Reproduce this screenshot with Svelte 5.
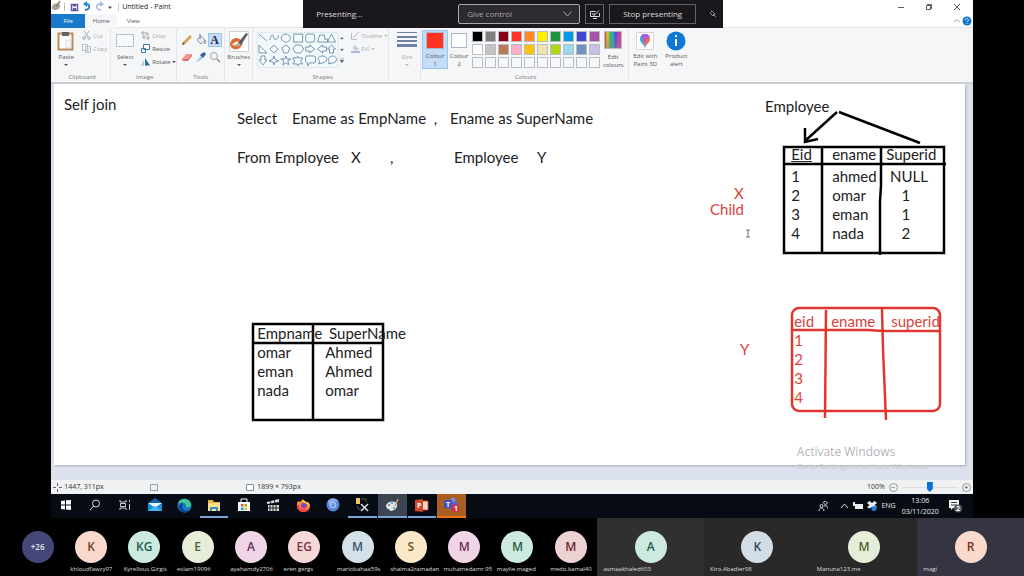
<script>
    const palette = [
        "#000000", "#7f7f7f", "#880015", "#ff3224", "#ff8a27", "#fff200", "#1e9440", "#0098e8", "#3f48cc", "#a555a5",
        "#ffffff", "#c3c3c3", "#b97a57", "#ffaec9", "#ffc20e", "#efe4b0", "#b0d619", "#99d9ea", "#7092be", "#c8bfe7",
        "", "", "", "", "", "", "", "", "", ""
    ];

    // text boxes typed straight onto the canvas
    const notes = [
        { x: 10, y: 26, text: "Self join" },
        { x: 183, y: 40, text: "Select" },
        { x: 238, y: 40, text: "Ename as EmpName  ," },
        { x: 396, y: 40, text: "Ename as SuperName" },
        { x: 183, y: 79, text: "From Employee" },
        { x: 297, y: 79, text: "X" },
        { x: 336, y: 79, text: "," },
        { x: 400, y: 79, text: "Employee" },
        { x: 483, y: 79, text: "Y" },
        { x: 711, y: 28, text: "Employee" },
        { x: 680, y: 115, text: "X", red: true },
        { x: 656, y: 131, text: "Child", red: true },
        { x: 686, y: 271, text: "Y", red: true }
    ];

    const employees = [
        ["1", "ahmed", " NULL"],
        ["2", "omar", "    1"],
        ["3", "eman", "    1"],
        ["4", "nada", "    2"]
    ];

    const result = [
        ["omar", "Ahmed"],
        ["eman", "Ahmed"],
        ["nada", "omar"]
    ];

    const people = [
        { initials: "K", name: "khloudfawzy97", bg: "#f8d9cc", fg: "#7a3b22" },
        { initials: "KG", name: "Kyrellous Girgis", bg: "#cdeadf", fg: "#1e5c46" },
        { initials: "E", name: "eslam19096", bg: "#e6edd9", fg: "#4c6335" },
        { initials: "A", name: "ayahamdy2706", bg: "#efd5e5", fg: "#6b2f57" },
        { initials: "EG", name: "eren gergs", bg: "#f6d8d9", fg: "#7a3540" },
        { initials: "M", name: "mariobahaa59s", bg: "#d5e1e9", fg: "#36536a" },
        { initials: "S", name: "shaima2ramadan", bg: "#fbe8c8", fg: "#6b501c" },
        { initials: "M", name: "muhamedamr.95", bg: "#efd5e5", fg: "#6b2f57" },
        { initials: "M", name: "maylie.maged", bg: "#cdeadf", fg: "#1e5c46" },
        { initials: "M", name: "medo.kamal40", bg: "#ecd2d3", fg: "#6b2630" },
        { initials: "A", name: "asmaakhaled603", bg: "#cdeadf", fg: "#1e5c46", tile: "grey" },
        { initials: "K", name: "Kiro.Abadier98", bg: "#d2dde6", fg: "#2c4a5a", tile: "dark" },
        { initials: "M", name: "Manuna123.me", bg: "#e6edd9", fg: "#4c6335", tile: "dark" },
        { initials: "R", name: "magi", bg: "#f8d9cc", fg: "#7a2f1c", tile: "speaking" }
    ];

    let colour = $state("#ff3224");
    let zoom = $state(50);
</script>

<div class="page">
    <div class="desktop">
        <header class="titlebar">
            <svg class="quick" width="62" height="14" viewBox="0 0 62 14" fill="none">
                <path d="M1 6c1-3 6-4 8-1 1 3-2 5-5 5-2 0-4-1-3-4z" fill="#aaa79c" />
                <path d="M5 7l4-6" stroke="#8e7b62" stroke-width="1.5" />
                <path d="M13.500 3v8" stroke="#bbb" />
                <path d="M20.500 4.500h6v6h-6z" fill="#fff" stroke="#6256a5" stroke-width="1.500" />
                <path d="M22 4h3v2.500h-3zM22 8h3v2h-3z" fill="#6256a5" />
                <path d="M34 10c6-1 5-6 1-6h-1" stroke="#2788d0" stroke-width="2" />
                <path d="M36 1v6l-4-3z" fill="#2788d0" />
                <path d="M50 10c-6-1-5-6-1-6h1" stroke="#9fbbdc" stroke-width="1.500" />
                <path d="M49 1v6l4-3z" fill="#9fbbdc" />
                <path d="M57 6.500h4l-2 2.500z" fill="#555" />
            </svg>
            <span class="title">Untitled - Paint</span>
            <div class="window-buttons">
                <button aria-label="Minimise"><svg width="8" height="8"><path d="M1 4.500h6" /></svg></button>
                <button aria-label="Restore"><svg width="8" height="8"><path d="M1.500 2.500h4v4h-4zM2.500 2.500v-1h4v4h-1" /></svg></button>
                <button aria-label="Close"><svg width="8" height="8"><path d="M1 1l6 6M7 1l-6 6" /></svg></button>
            </div>
        </header>

        <nav class="tabs">
            <button class="file">File</button>
            <button class="current">Home</button>
            <button>View</button>
            <svg width="20" height="10" viewBox="0 0 20 10">
                <path d="M1 6l3-2.500 3 2.500" fill="none" stroke="#aaa" />
                <circle cx="14" cy="5" r="4.500" fill="#1477cf" />
                <path d="M12.500 4c0-2 3-2 3 0 0 1-1.500 1-1.500 2M14 7v1" fill="none" stroke="#fff" stroke-width=".8" />
            </svg>
        </nav>

        <div class="ribbon">
            <section class="group clipboard">
                <div class="tools">
                    <button class="big">
                        <svg width="18" height="21" viewBox="0 0 18 21">
                            <path d="M1.500 2.500h14v16h-14z" fill="#fff" stroke="#bd8a5c" stroke-width="2" />
                            <path d="M5 1h7v4H5z" fill="#67625f" />
                            <path d="M9 9h5v8H9z" fill="#f4f6fb" stroke="#c9cedb" stroke-width=".6" />
                        </svg>
                        <span>Paste</span>
                        <i></i>
                    </button>
                    <div class="stack">
                        <button class="off">
                            <svg width="9" height="9" viewBox="0 0 9 9" fill="none" stroke="#a9b1c2"><path d="M2 0l4 6M7 0L3 6" /><circle cx="2" cy="7" r="1.300" /><circle cx="7" cy="7" r="1.300" /></svg>
                            Cut
                        </button>
                        <button class="off">
                            <svg width="9" height="9" viewBox="0 0 9 9" fill="#f8f9fc" stroke="#b4bccb"><path d="M.5.500h5v6h-5zM3.500 2.500h5v6h-5zM5 5h2M5 7h2" /></svg>
                            Copy
                        </button>
                    </div>
                </div>
                <h2>Clipboard</h2>
            </section>

            <section class="group image">
                <div class="tools">
                    <button class="big">
                        <svg width="18" height="21" viewBox="0 0 18 21"><path d="M.5 3.500h17v12H.5z" fill="#f7f9fb" stroke="#9aa7b5" stroke-dasharray="2 1" /></svg>
                        <span>Select</span>
                        <i></i>
                    </button>
                    <div class="stack">
                        <button class="off">
                            <svg width="9" height="9" viewBox="0 0 9 9" fill="none" stroke="#a9a9b0"><path d="M2 0v7h7M0 2h7v7M2 7l5-5" /></svg>
                            Crop
                        </button>
                        <button>
                            <svg width="9" height="9" viewBox="0 0 9 9" fill="#fff" stroke="#3b7ba5"><path d="M2.500.500h6v5h-6zM.5 4.500h4v4h-4z" /></svg>
                            Resize
                        </button>
                        <button>
                            <svg width="9" height="9" viewBox="0 0 9 9"><path d="M0 8.500L3 3v5.500z" fill="#9fcbe4" /><path d="M4 1l5 7.500H4z" fill="#2a6d93" /></svg>
                            Rotate <i></i>
                        </button>
                    </div>
                </div>
                <h2>Image</h2>
            </section>

            <section class="group drawing">
                <div class="tools tool-grid">
                    <button aria-label="Pencil"><svg width="12" height="12" viewBox="0 0 12 12"><path d="M1 11l1-3 7-7 2 2-7 7z" fill="#d9a15a" /><path d="M1 11l1-3 2 2z" fill="#6b5541" /></svg></button>
                    <button aria-label="Fill"><svg width="12" height="12" viewBox="0 0 12 12"><path d="M6 2l4 4-4 4-4-4z" fill="#eef1f6" stroke="#8b97a6" /><path d="M5 0v5M10 6v4" stroke="#8197b5" stroke-width="1.500" /></svg></button>
                    <button class="chosen" aria-label="Text"><b>A</b></button>
                    <button aria-label="Eraser"><svg width="12" height="12" viewBox="0 0 12 12"><path d="M1 8l4-5h6L7 8z" fill="#f4968f" /><path d="M1 8h6v2H2zM7 8l4-5v2L7 10z" fill="#dc6d6d" /></svg></button>
                    <button aria-label="Colour picker"><svg width="12" height="12" viewBox="0 0 12 12"><path d="M1 11l5-6 2 2-6 4z" fill="#9cc5e4" /><path d="M5 4l4-3 2 2-3 4z" fill="#275f9b" /></svg></button>
                    <button aria-label="Magnifier"><svg width="12" height="12" viewBox="0 0 12 12" fill="none"><circle cx="5" cy="5" r="3.500" fill="#f4f8fb" stroke="#98a3ad" /><path d="M8 8l3 3" stroke="#a48d72" stroke-width="1.500" /></svg></button>
                </div>
                <h2>Tools</h2>
            </section>

            <section class="group brushes">
                <button class="big">
                    <svg width="20" height="21" viewBox="0 0 20 21">
                        <path d="M.5.500h19v20H.5z" fill="#fff" stroke="#cfd3d9" />
                        <path d="M1 13C2 7 8 5 12 9c3 3 1 7-3 9-4 1-8-1-8-5z" fill="#e06b32" />
                        <path d="M3 14c2-4 6-4 8-3l-2 4z" fill="#fff1df" />
                        <path d="M9 12l8-10 2 1-7 11z" fill="#565c64" />
                        <path d="M6 15c1-2 3-3 4-3l2 2c-2 2-4 2-6 1z" fill="#b7a78f" />
                    </svg>
                    <span>Brushes</span>
                    <i></i>
                </button>
            </section>

            <section class="group shapes">
                <div class="tools">
                    <svg class="gallery" width="90" height="36" viewBox="0 0 90 36" fill="#f8fcff" stroke="#557d9c" stroke-width=".8">
                        <path d="M.5.500h81v35H.5z" fill="#f1f9fb" stroke="#dce3e9" />
                        <path d="M2 2l8 7M13 8c2-8 3-5 4-2s4 1 5-3" fill="none" />
                        <ellipse cx="29" cy="6" rx="4.500" ry="4" />
                        <rect x="37" y="2" width="9" height="8" />
                        <rect x="49" y="2" width="9" height="8" rx="2" />
                        <path d="M61 10l2-7h5v4h3v3zM75 2l4 8h-8z" />
                        <path d="M2 13l8 8H2zM17 13l4 4-4 4-4-4zM29 13l4 3-2 5h-4l-2-5zM39 13h5l3 4-3 4h-5l-3-4zM49 15h4v-2l5 4-5 4v-2h-4zM70 15h-4v-2l-5 4 5 4v-2h4zM75 13l4 4h-2v4h-4v-4h-2z" />
                        <path d="M4 24h4v4h2l-4 5-4-5h2zM17 24l1 3 4 2-4 1-1 3-1-3-4-1 4-2zM29 24l1 3h4l-3 2 1 4-3-2-3 2 1-4-3-2h4zM41 24l1 2h4l-2 3 2 3h-4l-1 2-1-2h-4l2-3-2-3h4z" />
                        <path d="M50 24h7q2 0 2 2v3q0 2-2 2h-4l-2 3v-3q-2 0-2-2v-3q0-2 1-2z" />
                        <path d="M62 32l1-3c-3-2-1-5 3-5 5 0 6 6 0 7zM72 32l1-2c-3-3 0-6 4-6 4 1 4 7-1 7z" />
                        <path d="M84 7h3l-1.500-2zM84 17h3l-1.500 2zM83.500 28h4l-2 3zM83.500 26.500h4" fill="#666" stroke="#666" stroke-width=".3" />
                    </svg>
                    <div class="stack">
                        <button class="off">
                            <svg width="9" height="9" viewBox="0 0 9 9" fill="none" stroke="#b7bcc7"><path d="M.5 2v6.500H6M2 7l6-6" /></svg>
                            Outline <i></i>
                        </button>
                        <button class="off">
                            <svg width="9" height="9" viewBox="0 0 9 9"><path d="M1 4l3-3 4 4-3 2z" fill="#c5cede" /><path d="M0 7h9v2H0z" fill="#aeb8d6" /></svg>
                            Fill <i></i>
                        </button>
                    </div>
                </div>
                <h2>Shapes</h2>
            </section>

            <section class="group size">
                <button class="big off">
                    <svg width="20" height="21" viewBox="0 0 20 21" fill="#727fa9"><path d="M0 1h20v1H0zM0 5h20v2H0zM0 9h20v2H0zM0 13h20v3H0z" /></svg>
                    <span>Size</span>
                    <i></i>
                </button>
            </section>

            <section class="group colours">
                <div class="tools">
                    <button class="big slot chosen"><em style="background: {colour}"></em><span>Colour<br>1</span></button>
                    <button class="big slot second"><em></em><span>Colour<br>2</span></button>
                    <div class="palette">
                        {#each palette as swatch}
                            <button
                                aria-label={swatch || "empty"}
                                style="background: {swatch || '#f7f8f9'}"
                                onclick={() => swatch && (colour = swatch)}
                            ></button>
                        {/each}
                    </div>
                    <button class="big">
                        <span class="rainbow"></span>
                        <span>Edit<br>colours</span>
                    </button>
                </div>
                <h2>Colours</h2>
            </section>

            <section class="group extra">
                <button class="big">
                    <svg width="18" height="20" viewBox="0 0 18 20">
                        <path d="M.5 1.500h17v17H.5z" fill="#fcfcfd" stroke="#d5d8dc" />
                        <path d="M9 17c-1-4-5-5-5-9 0-3 2-5 5-5v7z" fill="#38a9e4" />
                        <path d="M9 3c3 0 5 2 5 5 0 4-4 5-5 9z" fill="#f07048" />
                        <path d="M9 3c3 0 4 1 4.500 3L9 9 5 6c0-2 2-3 4-3z" fill="#a65be0" />
                        <circle cx="9" cy="9" r="2" fill="#ec4b99" />
                    </svg>
                    <span>Edit with<br>Paint 3D</span>
                </button>
                <button class="big">
                    <svg width="20" height="20" viewBox="0 0 20 20"><circle cx="10" cy="10" r="9.500" fill="#0f78d4" /><path d="M10 8v7M10 4v2" stroke="#fff" stroke-width="2" /></svg>
                    <span>Product<br>alert</span>
                </button>
            </section>
        </div>

        <main class="workspace">
            <div class="canvas">
                <svg class="strokes" width="100%" height="100%">
                    <g fill="none" stroke="#000" stroke-width="2.500">
                        <path d="M730 63h160v106H730zM730 80h162M768 63v106M827 62v40l-1 15v54" />
                        <path d="M783 28l-32 29M751 44v14l13-3M785 28l81 31" />
                        <path d="M199 240h130v96H199zM199 259h130M259 240v96" />
                    </g>
                    <g fill="none" stroke="#e3352f" stroke-width="2.500">
                        <rect x="738" y="224" width="148" height="103" rx="7" />
                        <path d="M738 246h76l15 1h58M772 226l-1 108M828 225l1 40 3 71" />
                    </g>
                    {#each notes as note}
                        <text x={note.x} y={note.y} class:red={note.red}>{note.text}</text>
                    {/each}
                    <path d="M692 146h4M694 146v7M692 153h4" stroke="#555" fill="none" stroke-width=".8" />
                </svg>

                <table class="employee">
                    <thead><tr><th><u>Eid</u></th><th>ename</th><th>Superid</th></tr></thead>
                    <tbody>
                        {#each employees as row}
                            <tr>{#each row as cell}<td>{cell}</td>{/each}</tr>
                        {/each}
                    </tbody>
                </table>

                <table class="result">
                    <thead><tr><th>Empname</th><th>{" SuperName"}</th></tr></thead>
                    <tbody>
                        {#each result as row}
                            <tr>{#each row as cell}<td>{cell}</td>{/each}</tr>
                        {/each}
                    </tbody>
                </table>

                <table class="super red">
                    <thead><tr><th>eid</th><th>ename</th><th>superid</th></tr></thead>
                    <tbody>
                        {#each employees as row}
                            <tr><td>{row[0]}</td><td></td><td></td></tr>
                        {/each}
                    </tbody>
                </table>
            </div>
            <div class="watermark">
                <p>Activate Windows</p>
                <small>Go to Settings to activate Windows.</small>
            </div>
        </main>

        <footer class="status">
            <span class="position">
                <svg width="9" height="9" viewBox="0 0 9 9"><path d="M4.500 0v3M4.500 6v3M0 4.500h3M6 4.500h3" stroke="#667" /></svg>
                1447, 311px
            </span>
            <span class="selection">
                <svg width="10" height="9" viewBox="0 0 10 9"><path d="M1.500 1.500h7v6h-7z" fill="none" stroke="#999fa8" /></svg>
            </span>
            <span class="dimensions">
                <svg width="10" height="9" viewBox="0 0 10 9"><path d="M1.500 1.500h7v6h-7z" fill="#fff" stroke="#7b91ab" /></svg>
                1899 × 793px
            </span>
            <label for="zoom">100%</label>
            <button aria-label="Zoom out">−</button>
            <input id="zoom" type="range" min="0" max="100" bind:value={zoom}>
            <button aria-label="Zoom in">+</button>
        </footer>

        <div class="taskbar">
            <div class="apps">
                <button aria-label="Start"><svg width="12" height="12" viewBox="0 0 12 12" fill="#fff"><path d="M1 2l4-.5v4H1zM6 1.300L11 1v4.500H6zM1 6.500h4v4L1 10zM6 6.500h5V11l-5-.5z" /></svg></button>
                <button aria-label="Search"><svg width="12" height="12" viewBox="0 0 12 12" fill="none" stroke="#ddd"><circle cx="7" cy="4.500" r="3.500" /><path d="M4.500 7L1 11" /></svg></button>
                <button aria-label="Task view"><svg width="12" height="12" viewBox="0 0 12 12" fill="none" stroke="#ccc"><path d="M1 1v2h6V1M1.500 4.500h5v3h-5zM1 11V9h6v2M10.500 1v2M10.500 5v6" /></svg></button>
                <button aria-label="Mail"><svg width="16" height="14" viewBox="0 0 16 14"><path d="M1 5l7-5 7 5v8H1z" fill="#0f65b5" /><path d="M1 5h14l-7 5z" fill="#e9f5fc" /><path d="M1 5l7 5 7-5v8H1z" fill="#1890dd" /><path d="M1 13l7-5 7 5z" fill="#42b5ee" /></svg></button>
                <button aria-label="Edge"><svg width="15" height="15" viewBox="0 0 15 15"><circle cx="7.500" cy="7.500" r="7" fill="#1679c5" /><path d="M1 6C2 0 12-1 14 6c0 3-2 4-5 3 1-4-4-6-8-3z" fill="#45c795" /><path d="M5 8c0 4 4 6 8 4-4 5-12 2-11-4 1-2 3-3 5-2-1 0-2 1-2 2z" fill="#0c438c" /></svg></button>
                <button class="open" aria-label="Explorer"><svg width="14" height="13" viewBox="0 0 14 13"><path d="M1 1h5l1 2h6v9H1z" fill="#e9b53d" /><path d="M1 4h12v8H1z" fill="#fbe08c" /><path d="M3 12V8h8v4H9v-2H5v2z" fill="#398ec6" /></svg></button>
                <button aria-label="Store"><svg width="14" height="14" viewBox="0 0 14 14"><path d="M4 4V1h6v3" fill="none" stroke="#fff" /><path d="M1 4h12v9H1z" fill="#f5f5f5" /><path d="M4 6h2.500v2.500H4z" fill="#f35325" /><path d="M7.500 6H10v2.500H7.500z" fill="#81bc06" /><path d="M4 9.500h2.500V12H4z" fill="#05a6f0" /><path d="M7.500 9.500H10V12H7.500z" fill="#ffba08" /></svg></button>
                <button aria-label="Movies"><svg width="13" height="13" viewBox="0 0 13 13"><path d="M0 3l12-3v3L0 5z" fill="#ddd" /><path d="M1 6h11v6H1z" fill="#d8d8d8" /><path d="M3 1l1 4M7 0l1 4M3 6v6M6 6v6M9 6v6M1 9h11" stroke="#222" /></svg></button>
                <button aria-label="Firefox"><svg width="15" height="15" viewBox="0 0 15 15"><path d="M2 3l2 1 3-3c0 2 3 2 4 4l1-1c4 6 0 10-4 10C2 14-1 9 2 3z" fill="#ff9026" /><path d="M1 7c0 9 11 9 13 2-2 2-4 3-7 2C4 11 3 9 4 7z" fill="#f43f4e" /><circle cx="8" cy="7.500" r="3" fill="#8944c6" /><path d="M7 1c0 2 3 2 4 4l1-1c2 2 2 4 2 5-2-3-4-4-6-4-1-1-2-2-1-4z" fill="#ffd23e" /></svg></button>
                <button aria-label="Chromium"><svg width="14" height="14" viewBox="0 0 14 14"><circle cx="7" cy="7" r="6.500" fill="#5486d5" /><path d="M7 3.500h6C10-1 4-1 1.500 3.500L4 8z" fill="#89afe8" /><circle cx="7" cy="7" r="3" fill="#6f9be6" stroke="#b9d1f7" /></svg></button>
                <button class="open" aria-label="Management studio"><svg width="14" height="14" viewBox="0 0 14 14"><path d="M0 0h4v6H0z" fill="#edc864" /><path d="M5 1h5v3M2 8v3h3" fill="none" stroke="#555" /><path d="M5 6l7 7M12 6l-7 7" stroke="#d5dde2" stroke-width="1.500" /></svg></button>
                <button class="open front" aria-label="Paint"><svg width="15" height="15" viewBox="0 0 15 15"><path d="M1 8c0-4 9-7 11-2 1 4-3 7-7 7 0-3-3 0-4-5z" fill="#d8e8ec" /><path d="M10 8l3-7" stroke="#d2a065" stroke-width="1.500" /><circle cx="4" cy="7" r="1" fill="#e4443a" /><circle cx="7" cy="5" r="1" fill="#3e8edb" /><circle cx="9" cy="10" r="1" fill="#4ba94d" /></svg></button>
                <button class="open" aria-label="PowerPoint"><svg width="14" height="13" viewBox="0 0 14 13"><path d="M7 2h6v9H7z" fill="#f5d8ce" stroke="#d24726" stroke-width=".8" /><path d="M0 1l8-1v13l-8-1z" fill="#d24726" /><text x="2" y="9" class="glyph">P</text></svg></button>
                <button class="alerting" aria-label="Teams"><svg width="17" height="16" viewBox="0 0 17 16"><circle cx="10" cy="3" r="2.500" fill="#7b83eb" /><path d="M6 5h9v5c-1 5-9 5-9 0z" fill="#5a61c4" /><path d="M1 3h8v8H1z" fill="#4650b8" /><text x="3" y="10" class="glyph">T</text><circle cx="12.500" cy="11.500" r="4" fill="#d92f3d" /><text x="11" y="14" class="glyph">1</text></svg></button>
            </div>
            <div class="tray">
                <svg width="10" height="11" viewBox="0 0 10 11" fill="none" stroke="#ddd"><circle cx="3.500" cy="5" r="1.500" /><path d="M1 10c0-4 5-4 5 0M5 2c0-2 4-2 4 0s-3 2-3 0M6 5c3-1 4 1 4 3" /></svg>
                <svg class="up" width="9" height="6" viewBox="0 0 9 6" fill="none" stroke="#ddd"><path d="M1 5l3.500-4L8 5" /></svg>
                <svg width="10" height="8" viewBox="0 0 10 8" fill="#eee"><path d="M2 2h8v5H2zM0 0h2v4H0z" /></svg>
                <svg width="10" height="10" viewBox="0 0 10 10"><path d="M2.500 0L5 2 7.500 0 10 2 7.500 4 10 6 7.500 7.500 5 6 2.500 7.500 0 6l2.500-2L0 2z" fill="#e4efff" /><circle cx="7" cy="7.500" r="2.500" fill="#287de0" /></svg>
                <span>ENG</span>
                <time datetime="2020-11-03T13:06">13:06<br>03/11/2020</time>
                <svg class="action" width="15" height="14" viewBox="0 0 15 14"><path d="M1 1h10v8H5l-2 2V9H1z" fill="#fff" /><path d="M3 3.500h6M3 6h6" stroke="#333" /><circle cx="10" cy="9.500" r="4" fill="#555a60" /><text x="8" y="12" class="glyph">2</text></svg>
            </div>
        </div>

        <div class="sharing">
            <span>Presenting...</span>
            <div class="control">
                <select aria-label="Give control"><option>Give control</option></select>
                <svg width="9" height="6" viewBox="0 0 9 6" fill="none" stroke="#a9a7ae"><path d="M.5.500l4 4.500 4-4.500" /></svg>
            </div>
            <button class="system" aria-label="System audio">
                <svg width="10" height="9" viewBox="0 0 10 9" fill="none" stroke="#ddd"><path d="M.5 1.500h5M9.500 3v3.500h-9v-5M2 4h3M3 6.500l6-6M3 8.500h4" /></svg>
            </button>
            <button class="stop">Stop presenting</button>
            <svg class="pin" width="8" height="8" viewBox="0 0 8 8" fill="none" stroke="#8a888d"><path d="M1 3l2-2 3 3-2 2zM4 4l3 3" /></svg>
        </div>
    </div>

    <div class="participants">
        <div class="person"><span class="avatar more">+26</span></div>
        {#each people as person}
            <div class="person {person.tile}">
                <span class="avatar" style="background: {person.bg}; color: {person.fg}">{person.initials}</span>
                <span class="name">{person.name}</span>
            </div>
        {/each}
    </div>
</div>

<style>
    :global(body) {
        background: #000;
    }

    .page {
        display: flex;
        flex-direction: column;
        min-height: 100vh;
        font: 6px/8px "Open Sans", "Noto Sans", sans-serif;
        color: #555;
    }

    button {
        display: flex;
        align-items: center;
        justify-content: center;
        padding: 0;
        border: 0;
        background: none;
        color: inherit;
        font: inherit;
        white-space: nowrap;
    }

    i {
        width: 0;
        height: 0;
        border: 2px solid transparent;
        border-top-color: #555;
        border-bottom: 0;
    }

    .desktop {
        position: relative;
        display: flex;
        flex: 1;
        flex-direction: column;
        margin: 0 5%;
        background: #fff;
    }

    .titlebar {
        display: flex;
        align-items: center;
        height: 14px;
    }

    .title {
        margin-left: 5px;
        padding-left: 3px;
        border-left: 1px solid #ccc;
        font-size: 7px;
        color: #222;
    }

    .window-buttons {
        display: flex;
        gap: 20px;
        margin-left: auto;
        padding-right: 12px;
    }

    .window-buttons path {
        fill: none;
        stroke: #333;
        stroke-width: .8;
    }

    .tabs {
        display: flex;
        align-items: center;
        height: 14px;
        border-bottom: 1px solid #e3e4e7;
        box-sizing: border-box;
    }

    .tabs button {
        width: 32px;
        height: 14px;
    }

    .tabs .file {
        width: 34px;
        background: #1979ca;
        color: #fff;
    }

    .tabs .current {
        background: #f5f6f7;
    }

    .tabs svg {
        margin-left: auto;
    }

    .ribbon {
        display: flex;
        height: 54px;
        background: #f5f6f7;
        border-bottom: 2px solid #cbced2;
    }

    .group {
        display: flex;
        flex-direction: column;
        justify-content: space-between;
        padding: 3px 0 1px;
        border-right: 1px solid #e5e7ea;
        box-sizing: border-box;
    }

    .tools {
        display: flex;
        align-items: flex-start;
        gap: 4px;
    }

    h2 {
        margin: 0;
        font: inherit;
        text-align: center;
        color: #777;
    }

    .big {
        flex-direction: column;
        justify-content: flex-start;
        gap: 1px;
        min-width: 24px;
    }

    .big i {
        margin-top: 2px;
    }

    .stack {
        display: flex;
        flex-direction: column;
        align-items: flex-start;
        gap: 4px;
    }

    .stack button {
        gap: 2px;
        height: 9px;
    }

    .off {
        color: #aaa;
    }

    .off i {
        border-top-color: #bbb;
    }

    .clipboard {
        width: 60px;
        padding-left: 3px;
    }

    .image {
        width: 66px;
        padding-left: 2px;
    }

    .drawing {
        width: 48px;
    }

    .tool-grid {
        display: grid;
        grid-template-columns: repeat(3, 12px);
        gap: 5px 2px;
        justify-content: center;
        padding-top: 3px;
    }

    .tool-grid button {
        height: 12px;
    }

    .chosen {
        background: #c4dcf5;
        outline: 1px solid #9ac5ee;
    }

    .tool-grid b {
        font: bold 12px/12px "Liberation Serif", serif;
        color: #1d2f4d;
    }

    .brushes {
        width: 28px;
    }

    .shapes {
        width: 136px;
        padding-left: 4px;
    }

    .gallery {
        margin-top: 1px;
    }

    .size {
        width: 32px;
        padding-left: 4px;
    }

    .colours {
        width: 208px;
        padding-left: 2px;
    }

    .colours .tools {
        gap: 0;
    }

    .slot {
        width: 24px;
        height: 37px;
        gap: 3px;
        padding-top: 1px;
    }

    .slot em {
        width: 16px;
        height: 16px;
        border: 1px solid #aab7c8;
        background: #fff;
    }

    .slot.second em {
        width: 14px;
        height: 14px;
        margin: 1px;
    }

    .palette {
        display: grid;
        grid-template-columns: repeat(10, 11px);
        gap: 2px;
        padding: 0 1px;
    }

    .palette button {
        height: 11px;
        border: 1px solid #b9bcc0;
    }

    .rainbow {
        width: 16px;
        height: 16px;
        margin: 0 0 3px;
        border: 1px solid #bbb;
        background: linear-gradient(transparent, #8888), linear-gradient(90deg, #e8392e, #e9d92a, #31b645, #26a9d4, #4547d3, #c737c7, #e33965);
    }

    .extra {
        flex-direction: row;
        justify-content: flex-start;
        gap: 7px;
        padding-left: 4px;
        border: 0;
    }

    .workspace {
        position: relative;
        display: flex;
        flex: 1;
        padding: 0 8px 15px 3px;
        background: #dbe2ee;
    }

    .canvas {
        position: relative;
        flex: 1;
        overflow: hidden;
        background: #fff;
        box-shadow: 1px 1px 2px #a4acb8;
        color: #222;
        font: 15px/19px Lato, "Open Sans", sans-serif;
    }

    .strokes {
        position: absolute;
        inset: 0;
    }

    .strokes text {
        fill: #222;
        white-space: pre;
    }

    .strokes .red {
        fill: #dc3f3b;
    }

    .red {
        color: #dc3f3b;
    }

    table {
        position: absolute;
        border-collapse: collapse;
        table-layout: fixed;
    }

    th,
    td {
        height: 19px;
        padding: 0;
        font-weight: normal;
        text-align: left;
        white-space: pre;
    }

    .employee {
        left: 737px;
        top: 61px;
        width: 152px;
    }

    .employee th {
        padding-bottom: 3px;
    }

    .employee th:first-child {
        width: 41px;
    }

    .employee th:nth-child(2) {
        width: 54px;
    }

    .result {
        left: 203px;
        top: 240px;
        width: 140px;
    }

    .result th:first-child {
        width: 68px;
    }

    .super {
        left: 740px;
        top: 228px;
        width: 150px;
    }

    .super th:first-child {
        width: 37px;
    }

    .super th:nth-child(2) {
        width: 60px;
    }

    .watermark {
        position: absolute;
        right: 40px;
        bottom: 8px;
        width: 136px;
        color: #b4b6ba;
        white-space: nowrap;
    }

    .watermark p {
        margin: 0;
        font-size: 12px;
        line-height: 16px;
    }

    .watermark small {
        display: block;
        font-size: 8px;
        line-height: 12px;
        color: #c6cad0;
    }

    .status {
        display: flex;
        align-items: center;
        height: 14px;
        padding: 0 2px;
        background: #f0f1f2;
        color: #333;
        font-size: 7px;
    }

    .status span {
        display: flex;
        align-items: center;
        gap: 2px;
        width: 96px;
    }

    .status label {
        margin-left: auto;
    }

    .status button {
        width: 9px;
        height: 9px;
        margin: 0 4px;
        border: 1px solid #999;
        border-radius: 50%;
        line-height: 7px;
    }

    .status button:last-child {
        margin-right: 0;
    }

    .status input {
        width: 56px;
        height: 12px;
        margin: 0;
        appearance: none;
        background: linear-gradient(#dcdee0, #dcdee0) center / 100% 1px no-repeat;
    }

    .status input::-webkit-slider-thumb {
        width: 6px;
        height: 10px;
        appearance: none;
        background: #0874d1;
        clip-path: polygon(0 0, 100% 0, 100% 70%, 50% 100%, 0 70%);
    }

    .taskbar {
        display: flex;
        justify-content: space-between;
        height: 24px;
        background: #070c14;
        color: #eee;
    }

    .apps {
        display: grid;
        grid-template-columns: repeat(14, 1fr);
        width: 416px;
    }

    .apps button {
        margin-right: 1px;
        border-bottom: 2px solid transparent;
    }

    .apps .open {
        border-color: #7ca4d8;
    }

    .apps .front {
        background: #3b4450;
    }

    .apps .alerting {
        border-color: #ee7410;
        background: #a95f1d;
    }

    .glyph {
        fill: #fff;
        font: bold 7px "Open Sans", sans-serif;
    }

    .tray {
        display: flex;
        align-items: center;
        gap: 4px;
        padding-right: 10px;
        font-size: 7px;
        text-align: center;
    }

    .tray .up {
        margin-left: 8px;
    }

    .tray time {
        margin-left: 2px;
        line-height: 11px;
    }

    .tray .action {
        margin-left: 5px;
    }

    .sharing {
        position: absolute;
        top: 0;
        left: 252px;
        display: flex;
        align-items: center;
        width: 420px;
        height: 28px;
        padding-left: 13px;
        background: #1a181c;
        box-sizing: border-box;
        color: #ddd;
        font-size: 8px;
    }

    .control {
        display: flex;
        align-items: center;
        width: 122px;
        height: 20px;
        margin: 0 5px 0 auto;
        border: 1px solid #aaa8ae;
        border-radius: 2px;
        box-sizing: border-box;
        background: #2d2a31;
    }

    .control select {
        flex: 1;
        padding: 0 8px;
        border: 0;
        appearance: none;
        background: none;
        color: #a9a7ae;
        font: inherit;
    }

    .control svg {
        margin-right: 7px;
    }

    .sharing button {
        height: 20px;
        border: 1px solid #65636a;
    }

    .system {
        width: 19px;
        margin-right: 5px;
    }

    .stop {
        width: 87px;
    }

    .pin {
        margin: 0 6px 0 13px;
    }

    .participants {
        display: grid;
        grid-template-columns: repeat(11, minmax(0, 1fr)) repeat(4, minmax(0, 2fr));
        height: 58px;
        padding-left: 11px;
        background: #000;
    }

    .person {
        display: flex;
        flex-direction: column;
        align-items: center;
        gap: 2px;
        padding-top: 13px;
    }

    .grey {
        background: #303030;
    }

    .dark {
        background: #292929;
    }

    .speaking {
        background: #353541;
    }

    .avatar {
        width: 32px;
        height: 32px;
        border-radius: 50%;
        font-size: 12px;
        font-weight: 600;
        line-height: 32px;
        text-align: center;
    }

    .more {
        background: #444778;
        color: #e4e4f0;
        font-size: 8px;
    }

    .name {
        align-self: flex-start;
        padding-left: 6px;
        color: #ddd;
        white-space: nowrap;
    }
</style>
